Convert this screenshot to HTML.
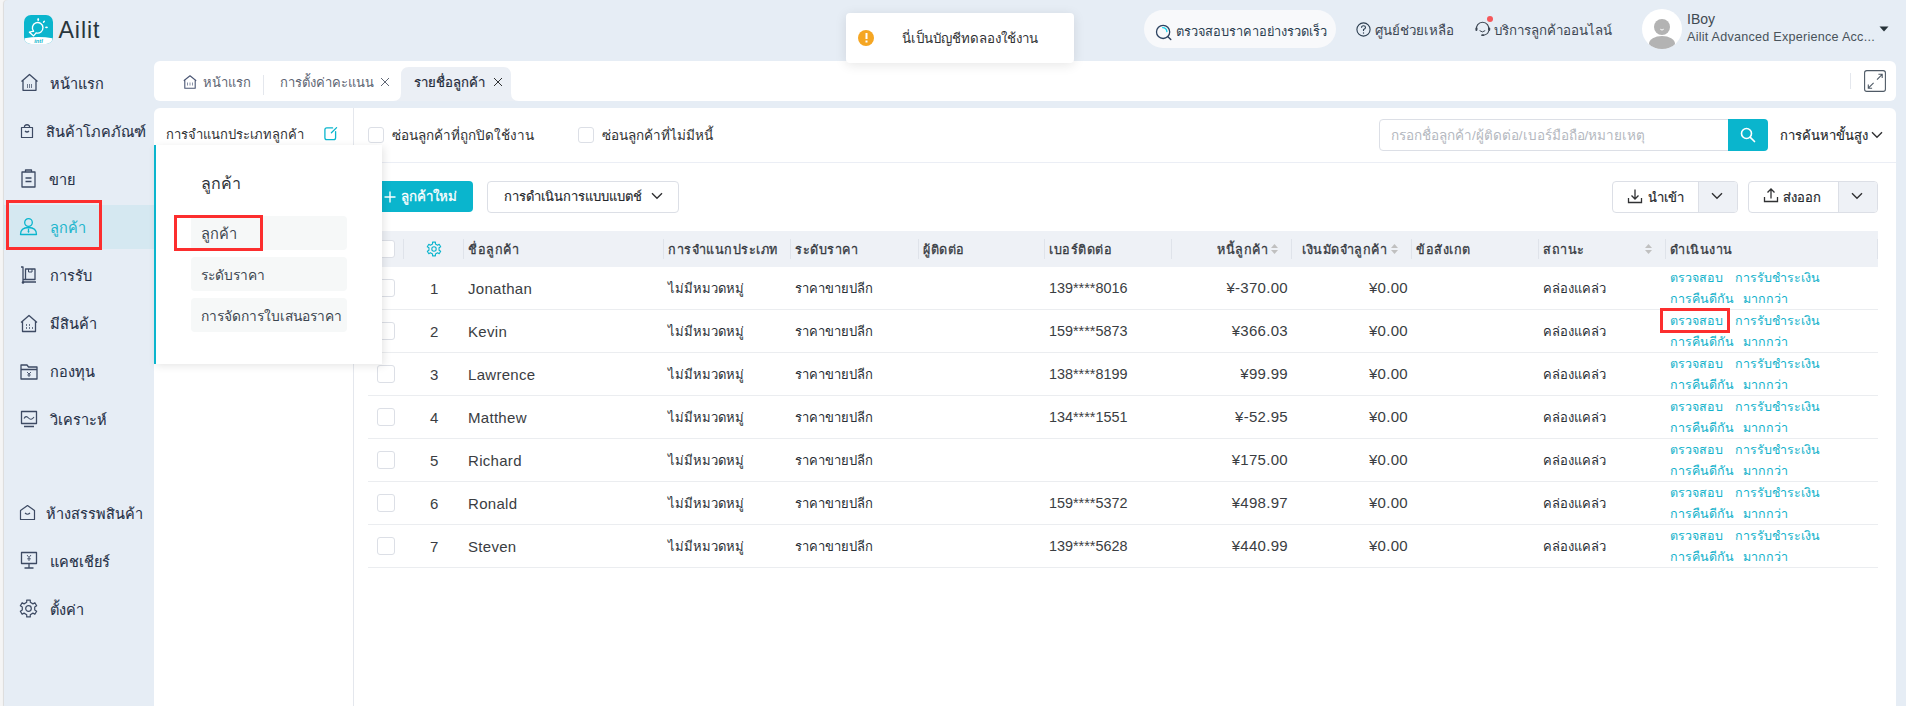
<!DOCTYPE html>
<html><head><meta charset="utf-8">
<style>
*{box-sizing:border-box;margin:0;padding:0}
html,body{width:1906px;height:706px;overflow:hidden}
body{font-family:"Liberation Sans",sans-serif;background:#f5f5f5;position:relative;color:#303133}
.a{position:absolute}
.t{position:absolute;white-space:nowrap;line-height:1}
.frame{position:absolute;left:4px;top:0;width:1902px;height:706px;background:#e6edf5;border-top-left-radius:4px;box-shadow:-1px 0 1px rgba(0,0,0,0.10)}
.sd{position:absolute;white-space:nowrap;line-height:1;color:#2b3447;font-size:14.5px;-webkit-text-stroke:0.1px currentColor}
.card{position:absolute;background:#fff;border-radius:6px}
.sep{position:absolute;top:239px;width:1px;height:20px;background:#dfe3ea}
.rl{position:absolute;left:368px;width:1510px;height:1px;background:#ebedf0}
.cb{position:absolute;width:18px;height:18px;border:1px solid #dcdfe6;border-radius:3px;background:#fff}
.c{position:absolute;white-space:nowrap;line-height:1;font-size:13px;color:#2a2f36}
.n{position:absolute;white-space:nowrap;line-height:1;font-size:15px;color:#3a3d42;letter-spacing:0.3px}
.hd{position:absolute;white-space:nowrap;line-height:1;font-size:12.6px;letter-spacing:0.5px;color:#34383e;-webkit-text-stroke:0.28px currentColor}
.lk{position:absolute;white-space:nowrap;line-height:1;font-size:12.5px;color:#13b2cb}
.ph{position:absolute;white-space:nowrap;line-height:1;font-size:14.4px;color:#3a3d42}
.btn{position:absolute;border:1px solid #dcdfe6;border-radius:4px;background:#fff}
</style></head><body>
<div class="frame"></div>
<div class="a" style="left:24px;top:15px;width:29px;height:29px;border-radius:7px;background:#0ab5cd;overflow:hidden">
<svg width="29" height="29" viewBox="0 0 29 29" style="position:absolute;left:0;top:0">
<path d="M9.6 16.2 A5.3 5.3 0 1 1 12.2 17.9" fill="none" stroke="#fff" stroke-width="1.35" stroke-linecap="round"/>
<path d="M9.6 16.2 L5.4 17.2 L9.6 20.9 L12.2 17.9" fill="none" stroke="#fff" stroke-width="1.3" stroke-linejoin="round"/>
<ellipse cx="14.2" cy="4.6" rx="0.9" ry="1.5" fill="#fff"/>
<ellipse cx="19.9" cy="6.7" rx="0.8" ry="1.4" fill="#fff" transform="rotate(40 19.9 6.7)"/>
<ellipse cx="22.5" cy="12.4" rx="1.4" ry="0.8" fill="#fff"/>
<path d="M0.5 23.2 Q14.5 20.6 28.5 23.2 L29 29 L0 29Z" fill="#fff"/>
<text x="14.5" y="28.2" font-size="5.6" font-family="Liberation Sans" font-weight="bold" font-style="italic" fill="#0ab5cd" text-anchor="middle">intl</text>
</svg></div>
<div class="t" style="left:58.5px;top:19px;font-size:23.2px;letter-spacing:0.9px;color:#2a363c">Ailit</div>
<div class="a" style="left:4px;top:205px;width:150px;height:44px;background:#d5e8f1"></div><svg class="a" style="left:20px;top:73px" width="19" height="19" viewBox="0 0 19 19"><path d="M1.5 8.5 L9.5 1.5 L17.5 8.5 M3 7.3 V17.3 H16 V7.3" fill="none" stroke="#3d4a63" stroke-width="1.3" stroke-linejoin="round"/><path d="M7.5 11V15M9.5 11V15M11.5 11V15" stroke="#3d4a63" stroke-width="1" opacity=".7"/></svg><div class="sd" style="left:49.5px;top:76.5px;color:#263147">หน้าแรก</div><svg class="a" style="left:19px;top:123px" width="16" height="16" viewBox="0 0 16 16"><path d="M2.5 4.5 H13.5 V14.5 H2.5 Z M5.5 4.5 V3 Q8 0.5 10.5 3 V4.5 M6 8 Q8 10 10 8" fill="none" stroke="#3d4a63" stroke-width="1.2" stroke-linejoin="round"/></svg><div class="sd" style="left:45.5px;top:124.5px;color:#263147">สินค้าโภคภัณฑ์</div><svg class="a" style="left:20px;top:169px" width="17" height="19" viewBox="0 0 17 19"><path d="M2 3 H15 V18 H2 Z M5.5 3 V1 H11.5 V3 M5.5 9 H11.5 M5.5 12.5 H11.5" fill="none" stroke="#3d4a63" stroke-width="1.3" stroke-linejoin="round"/></svg><div class="sd" style="left:49px;top:172.5px;color:#263147">ขาย</div><svg class="a" style="left:19px;top:217px" width="19" height="19" viewBox="0 0 19 19"><circle cx="9.5" cy="5.5" r="3.8" fill="none" stroke="#0ab5cd" stroke-width="1.3"/><path d="M1.5 17.5 Q1.5 10.5 9.5 10.5 Q17.5 10.5 17.5 17.5 Z" fill="none" stroke="#0ab5cd" stroke-width="1.3" stroke-linejoin="round"/><path d="M9.5 11.5 V15.5" stroke="#0ab5cd" stroke-width="1.3"/><path d="M8.5 14 L9.5 16 L10.5 14Z" fill="#0ab5cd"/></svg><div class="sd" style="left:49.5px;top:220.5px;color:#1fb6cd">ลูกค้า</div><svg class="a" style="left:19px;top:266px" width="19" height="19" viewBox="0 0 19 19"><path d="M2 1 H4 V16 H17 M4 13.5 H16 V3 H6.5 V13.5" fill="none" stroke="#3d4a63" stroke-width="1.3" stroke-linejoin="round"/><circle cx="4" cy="16.5" r="1.3" fill="#3d4a63"/><path d="M9.5 3 V6 H13 V3" fill="none" stroke="#3d4a63" stroke-width="1"/></svg><div class="sd" style="left:49.5px;top:268.5px;color:#263147">การรับ</div><svg class="a" style="left:20px;top:314px" width="18" height="19" viewBox="0 0 18 19"><path d="M1 8.5 L9 1.5 L17 8.5 M2.5 7.3 V17.5 H15.5 V7.3" fill="none" stroke="#3d4a63" stroke-width="1.3" stroke-linejoin="round"/><path d="M6 11h1M6 14h1M9 14h1M12 14h1M9 11h1" stroke="#3d4a63" stroke-width="1.4"/></svg><div class="sd" style="left:49.5px;top:316.5px;color:#263147">มีสินค้า</div><svg class="a" style="left:20px;top:363px" width="18" height="17" viewBox="0 0 18 17"><path d="M1 2 H7 L8.5 4 H17 V16 H1 Z M1 6.5 H17" fill="none" stroke="#3d4a63" stroke-width="1.3" stroke-linejoin="round"/><path d="M7 9 L9 11 L11 9 M9 11 V14 M7.3 12 H10.7" fill="none" stroke="#3d4a63" stroke-width="0.9"/></svg><div class="sd" style="left:49.5px;top:364.5px;color:#263147">กองทุน</div><svg class="a" style="left:20px;top:410px" width="18" height="19" viewBox="0 0 18 19"><path d="M1.5 1.5 H16.5 V13.5 H1.5 Z M4 16.5 H14" fill="none" stroke="#3d4a63" stroke-width="1.3" stroke-linejoin="round"/><path d="M4 8.5 Q6 5 8.5 8 Q11 11 14 7" fill="none" stroke="#3d4a63" stroke-width="1.1"/></svg><div class="sd" style="left:49.5px;top:412.5px;color:#263147">วิเคราะห์</div><svg class="a" style="left:19px;top:504px" width="17" height="17" viewBox="0 0 17 17"><path d="M1.5 6.5 L8.5 1.5 L15.5 6.5 V15.5 H1.5 Z" fill="none" stroke="#3d4a63" stroke-width="1.2" stroke-linejoin="round"/><path d="M6 9 Q8.5 11.5 11 9" fill="none" stroke="#3d4a63" stroke-width="1.1"/></svg><div class="sd" style="left:45.5px;top:506.5px;color:#263147">ห้างสรรพสินค้า</div><svg class="a" style="left:20px;top:551px" width="18" height="19" viewBox="0 0 18 19"><path d="M1.5 1.5 H16.5 V12.5 H1.5 Z M9 12.5 V16.5 M4.5 17 H13.5" fill="none" stroke="#3d4a63" stroke-width="1.3" stroke-linejoin="round"/><path d="M7 4 L9 6.5 L11 4 M9 6.5 V10 M7.2 7.8 H10.8" fill="none" stroke="#3d4a63" stroke-width="0.9"/></svg><div class="sd" style="left:49.5px;top:554.5px;color:#263147">แคชเชียร์</div><svg class="a" style="left:19px;top:599px" width="19" height="19" viewBox="0 0 19 19"><path d="M7.71 3.35 L7.71 1.09 L11.29 1.09 L11.29 3.35 L13.93 4.88 L15.89 3.75 L17.68 6.84 L15.72 7.97 L15.72 11.03 L17.68 12.16 L15.89 15.25 L13.93 14.12 L11.29 15.65 L11.29 17.91 L7.71 17.91 L7.71 15.65 L5.07 14.12 L3.11 15.25 L1.32 12.16 L3.28 11.03 L3.28 7.97 L1.32 6.84 L3.11 3.75 L5.07 4.88 Z" fill="none" stroke="#3d4a63" stroke-width="1.2" stroke-linejoin="round"/><circle cx="9.5" cy="9.5" r="2.8" fill="none" stroke="#3d4a63" stroke-width="1.2"/></svg><div class="sd" style="left:49.5px;top:602.5px;color:#263147">ตั้งค่า</div><div class="a" style="left:6px;top:200px;width:96px;height:50px;border:3px solid #fc2e2e"></div><div class="a" style="left:846px;top:13px;width:228px;height:50px;background:#fff;border-radius:4px;box-shadow:0 2px 12px rgba(0,0,0,0.10);z-index:5">
<div class="a" style="left:12px;top:17px;width:16px;height:16px;border-radius:50%;background:#f5a623"></div>
<div class="t" style="left:18.5px;top:19.5px;width:3px;height:8px;"><svg width="3" height="10" style="position:absolute;left:0;top:0"><rect x="0.5" y="0" width="2" height="6" fill="#fff"/><rect x="0.5" y="7.5" width="2" height="2" fill="#fff"/></svg></div>
<div class="t" style="left:56px;top:19px;font-size:13.3px;color:#303133">นี่เป็นบัญชีทดลองใช้งาน</div>
</div><div class="a" style="left:1144px;top:10px;width:192px;height:38px;background:#f8f9fb;border-radius:19px"></div>
<svg class="a" style="left:1155px;top:24px" width="18" height="18" viewBox="0 0 18 18"><circle cx="8.1" cy="7.9" r="6.6" fill="none" stroke="#2c4260" stroke-width="1.3"/><path d="M12.9 12.7 L15.8 15.6" stroke="#2c4260" stroke-width="1.4" stroke-linecap="round"/><path d="M7.6 3.6 A4.4 4.4 0 0 1 11.9 7.6" fill="none" stroke="#19d3ee" stroke-width="1.3" stroke-linecap="round"/></svg>
<div class="t" style="left:1176px;top:26px;font-size:12.8px;color:#2c3e50">ตรวจสอบราคาอย่างรวดเร็ว</div>
<svg class="a" style="left:1356px;top:22px" width="15" height="15" viewBox="0 0 15 15"><circle cx="7.5" cy="7.5" r="6.6" fill="none" stroke="#2c3e50" stroke-width="1.1"/><path d="M5.5 5.8 Q5.5 3.8 7.5 3.8 Q9.5 3.8 9.5 5.6 Q9.5 6.8 7.5 7.6 V9" fill="none" stroke="#2c3e50" stroke-width="1.1"/><circle cx="7.5" cy="11" r="0.7" fill="#2c3e50"/></svg>
<div class="t" style="left:1375px;top:23.5px;font-size:13.3px;color:#3c4652">ศูนย์ช่วยเหลือ</div>
<svg class="a" style="left:1474px;top:20px" width="18" height="18" viewBox="0 0 18 18"><path d="M2.6 10 A6.2 6.2 0 1 1 14.6 10" fill="none" stroke="#3c4652" stroke-width="1.1"/><rect x="1.4" y="7.4" width="2" height="3.6" rx="1" fill="#3c4652"/><rect x="14.2" y="7.4" width="2" height="3.6" rx="1" fill="#3c4652"/><path d="M5.6 10.6 Q8.4 13.2 11.2 10.6" fill="none" stroke="#3c4652" stroke-width="1"/><path d="M14.8 10.5 Q14 14.6 9.5 15.2" fill="none" stroke="#3c4652" stroke-width="1.1"/><rect x="7.2" y="14.3" width="3" height="1.8" rx="0.9" fill="#3c4652"/></svg>
<div class="a" style="left:1487px;top:16px;width:6px;height:6px;border-radius:50%;background:#f5575a"></div>
<div class="t" style="left:1494px;top:23.5px;font-size:13.3px;color:#3c4652">บริการลูกค้าออนไลน์</div>
<div class="a" style="left:1642px;top:9px;width:40px;height:40px;border-radius:50%;background:#fff;overflow:hidden">
<svg width="40" height="40" viewBox="0 0 40 40" style="position:absolute;left:0;top:0"><circle cx="20" cy="18" r="8" fill="#b3b3b3"/><path d="M18.3 20.2 Q20 22 21.7 20.2" fill="none" stroke="#fff" stroke-width="1"/><ellipse cx="20" cy="35" rx="13" ry="8" fill="#b3b3b3"/></svg></div>
<div class="t" style="left:1687px;top:12px;font-size:14px;color:#3f4a52">IBoy</div>
<div class="t" style="left:1687px;top:31px;font-size:12.6px;letter-spacing:0.25px;color:#48525a">Ailit Advanced Experience Acc...</div>
<svg class="a" style="left:1879px;top:26px" width="10" height="6" viewBox="0 0 10 6"><path d="M0.5 0.5 H9.5 L5 5.5Z" fill="#263238"/></svg>
<div class="card" style="left:154px;top:61px;width:1742px;height:40px"></div><svg class="a" style="left:183px;top:75px" width="14" height="14" viewBox="0 0 14 14"><path d="M0.8 5.8 L7 0.8 L13.2 5.8 M1.8 5 V13.2 H12.2 V5" fill="none" stroke="#4a5573" stroke-width="1.1" stroke-linejoin="round"/><path d="M4.5 7.5V10.5M7 7.5V10.5M9.5 7.5V10.5" stroke="#8a93a8" stroke-width="1"/></svg><div class="t" style="left:203px;top:76px;font-size:13px;color:#5d6573">หน้าแรก</div><div class="a" style="left:263px;top:75px;width:1px;height:20px;background:#e4e7ed"></div><div class="t" style="left:280px;top:76px;font-size:13px;color:#5d6573">การตั้งค่าคะแนน</div><svg class="a" style="left:380px;top:77px" width="10" height="10" viewBox="0 0 10 10"><path d="M1 1 L9 9 M9 1 L1 9" stroke="#606775" stroke-width="1"/></svg><svg class="a" style="left:393px;top:67px" width="126" height="34" viewBox="0 0 126 34"><path d="M0 34 Q8 34 8 26 V8 Q8 0 16 0 H110 Q118 0 118 8 V26 Q118 34 126 34 Z" fill="#ebeff5"/></svg><div class="t" style="left:414px;top:76px;font-size:13.2px;color:#1f2a3a;-webkit-text-stroke:0.2px currentColor">รายชื่อลูกค้า</div><svg class="a" style="left:493px;top:77px" width="10" height="10" viewBox="0 0 10 10"><path d="M1 1 L9 9 M9 1 L1 9" stroke="#303133" stroke-width="1"/></svg><div class="a" style="left:1850px;top:73px;width:1px;height:16px;background:#e4e7ed"></div><svg class="a" style="left:1864px;top:70px" width="22" height="22" viewBox="0 0 22 22"><rect x="0.6" y="0.6" width="20.8" height="20.8" rx="2.2" fill="none" stroke="#4f5a66" stroke-width="1.1"/><path d="M13 9.6 L18.2 4.3 M14.4 4.3 H18.2 V8.1 M4.3 18.2 L9.6 12.9 M4.3 14.4 V18.2 H8.1" fill="none" stroke="#4f5a66" stroke-width="1.1"/></svg><div class="card" style="left:154px;top:108px;width:1742px;height:620px"></div><div class="a" style="left:353px;top:108px;width:1px;height:598px;background:#e4e7ed"></div><div class="t" style="left:166px;top:128px;font-size:13px;color:#303133">การจำแนกประเภทลูกค้า</div><svg class="a" style="left:323px;top:126px" width="16" height="16" viewBox="0 0 16 16"><path d="M9.6 1.9 H3.8 Q1.9 1.9 1.9 3.8 V11.8 Q1.9 13.7 3.8 13.7 H10.7 Q12.6 13.7 12.6 11.8 V5.6" fill="none" stroke="#0ab5cd" stroke-width="1.3" stroke-linecap="round"/><path d="M8.4 6.8 L13.6 1.6" stroke="#0ab5cd" stroke-width="1.3" stroke-linecap="round"/></svg><div class="cb" style="left:368px;top:127px;width:16px;height:16px;border-radius:3px"></div><div class="t" style="left:392px;top:128.5px;font-size:13.5px;color:#303133">ซ่อนลูกค้าที่ถูกปิดใช้งาน</div><div class="cb" style="left:578px;top:127px;width:16px;height:16px;border-radius:3px"></div><div class="t" style="left:602px;top:128.5px;font-size:13.5px;color:#303133">ซ่อนลูกค้าที่ไม่มีหนี้</div><div class="a" style="left:1379px;top:119px;width:352px;height:32px;border:1px solid #dcdfe6;border-radius:4px 0 0 4px;background:#fff"></div><div class="t" style="left:1391px;top:129px;font-size:13.5px;color:#b4b8c0">กรอกชื่อลูกค้า/ผู้ติดต่อ/เบอร์มือถือ/หมายเหตุ</div><div class="a" style="left:1728px;top:119px;width:40px;height:32px;background:#0ab5cd;border-radius:0 4px 4px 0"></div><svg class="a" style="left:1740px;top:127px" width="16" height="16" viewBox="0 0 16 16"><circle cx="6.5" cy="6.5" r="5" fill="none" stroke="#fff" stroke-width="1.6"/><path d="M10.3 10.3 L14.5 14.5" stroke="#fff" stroke-width="1.7" stroke-linecap="round"/></svg><div class="t" style="left:1780px;top:129px;font-size:13px;color:#25282c;-webkit-text-stroke:0.15px currentColor">การค้นหาขั้นสูง</div><svg class="a" style="left:1871px;top:131px" width="12" height="8" viewBox="0 0 12 8"><path d="M1 1.2 L6 6.2 L11 1.2" fill="none" stroke="#303133" stroke-width="1.4"/></svg><div class="a" style="left:354px;top:162px;width:1542px;height:1px;background:#ebeef5"></div><div class="a" style="left:354px;top:181px;width:119px;height:31px;background:#0ab5cd;border-radius:0 4px 4px 0"></div><svg class="a" style="left:384px;top:191px" width="12" height="12" viewBox="0 0 12 12"><path d="M6 0.5V11.5M0.5 6H11.5" stroke="#fff" stroke-width="1.4"/></svg><div class="t" style="left:401px;top:190px;font-size:13.3px;color:#fff;-webkit-text-stroke:0.3px #fff">ลูกค้าใหม่</div><div class="btn" style="left:487px;top:181px;width:192px;height:32px"></div><div class="t" style="left:504px;top:190px;font-size:13px;color:#25282c;-webkit-text-stroke:0.15px currentColor">การดำเนินการแบบแบตช์</div><svg class="a" style="left:651px;top:192px" width="12" height="8" viewBox="0 0 12 8"><path d="M1 1.2 L6 6.2 L11 1.2" fill="none" stroke="#303133" stroke-width="1.4"/></svg><div class="btn" style="left:1612px;top:181px;width:126px;height:32px;overflow:hidden"><div class="a" style="left:85px;top:0;width:40px;height:30px;background:#eef1f6;border-left:1px solid #dcdfe6"></div></div><svg class="a" style="left:1627px;top:188px" width="16" height="16" viewBox="0 0 16 16"><path d="M1.5 10 V14.5 H14.5 V10 M8 1.5 V11 M4.5 7.5 L8 11 L11.5 7.5" fill="none" stroke="#303133" stroke-width="1.3"/></svg><div class="t" style="left:1648px;top:191px;font-size:13px;color:#25282c;-webkit-text-stroke:0.2px currentColor">นำเข้า</div><svg class="a" style="left:1711px;top:192px" width="12" height="8" viewBox="0 0 12 8"><path d="M1 1.2 L6 6.2 L11 1.2" fill="none" stroke="#303133" stroke-width="1.4"/></svg><div class="btn" style="left:1748px;top:181px;width:130px;height:32px;overflow:hidden"><div class="a" style="left:89px;top:0;width:40px;height:30px;background:#eef1f6;border-left:1px solid #dcdfe6"></div></div><svg class="a" style="left:1763px;top:187px" width="16" height="16" viewBox="0 0 16 16"><path d="M1.5 10 V14.5 H14.5 V10 M8 11.5 V2 M4.5 5.5 L8 2 L11.5 5.5" fill="none" stroke="#303133" stroke-width="1.3"/></svg><div class="t" style="left:1783px;top:191px;font-size:13px;color:#25282c;-webkit-text-stroke:0.2px currentColor">ส่งออก</div><svg class="a" style="left:1851px;top:192px" width="12" height="8" viewBox="0 0 12 8"><path d="M1 1.2 L6 6.2 L11 1.2" fill="none" stroke="#303133" stroke-width="1.4"/></svg><div class="a" style="left:368px;top:231px;width:1510px;height:36px;background:#eef1f6"></div><div class="sep" style="left:403px"></div><div class="sep" style="left:463px"></div><div class="sep" style="left:663px"></div><div class="sep" style="left:790px"></div><div class="sep" style="left:918px"></div><div class="sep" style="left:1044px"></div><div class="sep" style="left:1171px"></div><div class="sep" style="left:1291px"></div><div class="sep" style="left:1411px"></div><div class="sep" style="left:1538px"></div><div class="sep" style="left:1665px"></div><div class="sep" style="left:1877px"></div><div class="cb" style="left:377px;top:240px"></div><svg class="a" style="left:426px;top:241px" width="16" height="16" viewBox="0 0 16 16"><path d="M6.55 3.01 L6.54 1.15 L9.46 1.15 L9.45 3.01 L11.60 4.25 L13.20 3.32 L14.66 5.84 L13.05 6.76 L13.05 9.24 L14.66 10.16 L13.20 12.68 L11.60 11.75 L9.45 12.99 L9.46 14.85 L6.54 14.85 L6.55 12.99 L4.40 11.75 L2.80 12.68 L1.34 10.16 L2.95 9.24 L2.95 6.76 L1.34 5.84 L2.80 3.32 L4.40 4.25 Z" fill="none" stroke="#0ab5cd" stroke-width="1.1" stroke-linejoin="round"/><circle cx="8" cy="8" r="2.2" fill="none" stroke="#0ab5cd" stroke-width="1.1"/></svg><div class="hd" style="left:468px;top:244px">ชื่อลูกค้า</div><div class="hd" style="left:668px;top:244px">การจำแนกประเภท</div><div class="hd" style="left:795px;top:244px">ระดับราคา</div><div class="hd" style="left:923px;top:244px">ผู้ติดต่อ</div><div class="hd" style="left:1049px;top:244px">เบอร์ติดต่อ</div><div class="hd" style="left:1416px;top:244px">ข้อสังเกต</div><div class="hd" style="left:1543px;top:244px">สถานะ</div><div class="hd" style="left:1670px;top:244px">ดำเนินงาน</div><div class="hd" style="left:1217px;top:244px">หนี้ลูกค้า</div><div class="hd" style="left:1302px;top:244px">เงินมัดจำลูกค้า</div><svg class="a" style="left:1270px;top:243px" width="9" height="12" viewBox="0 0 9 12"><path d="M1 5 L4.5 1 L8 5Z M1 7 L4.5 11 L8 7Z" fill="#c0c0c0"/></svg><svg class="a" style="left:1390px;top:243px" width="9" height="12" viewBox="0 0 9 12"><path d="M1 5 L4.5 1 L8 5Z M1 7 L4.5 11 L8 7Z" fill="#c0c0c0"/></svg><svg class="a" style="left:1644px;top:243px" width="9" height="12" viewBox="0 0 9 12"><path d="M1 5 L4.5 1 L8 5Z M1 7 L4.5 11 L8 7Z" fill="#c0c0c0"/></svg><div class="rl" style="top:309px"></div><div class="cb" style="left:377px;top:279px"></div><div class="n" style="left:430px;top:280.5px">1</div><div class="n" style="left:468px;top:280.5px">Jonathan</div><div class="c" style="left:668px;top:282px">ไม่มีหมวดหมู่</div><div class="c" style="left:795px;top:282px">ราคาขายปลีก</div><div class="ph" style="left:1049px;top:281px">139****8016</div><div class="n" style="right:618px;top:280px">¥-370.00</div><div class="n" style="right:498px;top:280px">¥0.00</div><div class="c" style="left:1543px;top:282px">คล่องแคล่ว</div><div class="lk" style="left:1670px;top:271.5px">ตรวจสอบ</div><div class="lk" style="left:1735px;top:271.5px">การรับชำระเงิน</div><div class="lk" style="left:1670px;top:292.5px">การคืนดีกัน</div><div class="lk" style="left:1743px;top:292.5px">มากกว่า</div><div class="rl" style="top:352px"></div><div class="cb" style="left:377px;top:322px"></div><div class="n" style="left:430px;top:323.5px">2</div><div class="n" style="left:468px;top:323.5px">Kevin</div><div class="c" style="left:668px;top:325px">ไม่มีหมวดหมู่</div><div class="c" style="left:795px;top:325px">ราคาขายปลีก</div><div class="ph" style="left:1049px;top:324px">159****5873</div><div class="n" style="right:618px;top:323px">¥366.03</div><div class="n" style="right:498px;top:323px">¥0.00</div><div class="c" style="left:1543px;top:325px">คล่องแคล่ว</div><div class="lk" style="left:1670px;top:314.5px">ตรวจสอบ</div><div class="lk" style="left:1735px;top:314.5px">การรับชำระเงิน</div><div class="lk" style="left:1670px;top:335.5px">การคืนดีกัน</div><div class="lk" style="left:1743px;top:335.5px">มากกว่า</div><div class="rl" style="top:395px"></div><div class="cb" style="left:377px;top:365px"></div><div class="n" style="left:430px;top:366.5px">3</div><div class="n" style="left:468px;top:366.5px">Lawrence</div><div class="c" style="left:668px;top:368px">ไม่มีหมวดหมู่</div><div class="c" style="left:795px;top:368px">ราคาขายปลีก</div><div class="ph" style="left:1049px;top:367px">138****8199</div><div class="n" style="right:618px;top:366px">¥99.99</div><div class="n" style="right:498px;top:366px">¥0.00</div><div class="c" style="left:1543px;top:368px">คล่องแคล่ว</div><div class="lk" style="left:1670px;top:357.5px">ตรวจสอบ</div><div class="lk" style="left:1735px;top:357.5px">การรับชำระเงิน</div><div class="lk" style="left:1670px;top:378.5px">การคืนดีกัน</div><div class="lk" style="left:1743px;top:378.5px">มากกว่า</div><div class="rl" style="top:438px"></div><div class="cb" style="left:377px;top:408px"></div><div class="n" style="left:430px;top:409.5px">4</div><div class="n" style="left:468px;top:409.5px">Matthew</div><div class="c" style="left:668px;top:411px">ไม่มีหมวดหมู่</div><div class="c" style="left:795px;top:411px">ราคาขายปลีก</div><div class="ph" style="left:1049px;top:410px">134****1551</div><div class="n" style="right:618px;top:409px">¥-52.95</div><div class="n" style="right:498px;top:409px">¥0.00</div><div class="c" style="left:1543px;top:411px">คล่องแคล่ว</div><div class="lk" style="left:1670px;top:400.5px">ตรวจสอบ</div><div class="lk" style="left:1735px;top:400.5px">การรับชำระเงิน</div><div class="lk" style="left:1670px;top:421.5px">การคืนดีกัน</div><div class="lk" style="left:1743px;top:421.5px">มากกว่า</div><div class="rl" style="top:481px"></div><div class="cb" style="left:377px;top:451px"></div><div class="n" style="left:430px;top:452.5px">5</div><div class="n" style="left:468px;top:452.5px">Richard</div><div class="c" style="left:668px;top:454px">ไม่มีหมวดหมู่</div><div class="c" style="left:795px;top:454px">ราคาขายปลีก</div><div class="n" style="right:618px;top:452px">¥175.00</div><div class="n" style="right:498px;top:452px">¥0.00</div><div class="c" style="left:1543px;top:454px">คล่องแคล่ว</div><div class="lk" style="left:1670px;top:443.5px">ตรวจสอบ</div><div class="lk" style="left:1735px;top:443.5px">การรับชำระเงิน</div><div class="lk" style="left:1670px;top:464.5px">การคืนดีกัน</div><div class="lk" style="left:1743px;top:464.5px">มากกว่า</div><div class="rl" style="top:524px"></div><div class="cb" style="left:377px;top:494px"></div><div class="n" style="left:430px;top:495.5px">6</div><div class="n" style="left:468px;top:495.5px">Ronald</div><div class="c" style="left:668px;top:497px">ไม่มีหมวดหมู่</div><div class="c" style="left:795px;top:497px">ราคาขายปลีก</div><div class="ph" style="left:1049px;top:496px">159****5372</div><div class="n" style="right:618px;top:495px">¥498.97</div><div class="n" style="right:498px;top:495px">¥0.00</div><div class="c" style="left:1543px;top:497px">คล่องแคล่ว</div><div class="lk" style="left:1670px;top:486.5px">ตรวจสอบ</div><div class="lk" style="left:1735px;top:486.5px">การรับชำระเงิน</div><div class="lk" style="left:1670px;top:507.5px">การคืนดีกัน</div><div class="lk" style="left:1743px;top:507.5px">มากกว่า</div><div class="rl" style="top:567px"></div><div class="cb" style="left:377px;top:537px"></div><div class="n" style="left:430px;top:538.5px">7</div><div class="n" style="left:468px;top:538.5px">Steven</div><div class="c" style="left:668px;top:540px">ไม่มีหมวดหมู่</div><div class="c" style="left:795px;top:540px">ราคาขายปลีก</div><div class="ph" style="left:1049px;top:539px">139****5628</div><div class="n" style="right:618px;top:538px">¥440.99</div><div class="n" style="right:498px;top:538px">¥0.00</div><div class="c" style="left:1543px;top:540px">คล่องแคล่ว</div><div class="lk" style="left:1670px;top:529.5px">ตรวจสอบ</div><div class="lk" style="left:1735px;top:529.5px">การรับชำระเงิน</div><div class="lk" style="left:1670px;top:550.5px">การคืนดีกัน</div><div class="lk" style="left:1743px;top:550.5px">มากกว่า</div><div class="a" style="left:1660px;top:308px;width:70px;height:25px;border:3px solid #fc2e2e"></div><div class="a" style="left:154px;top:145px;width:228px;height:219px;background:#fff;border-left:2px solid #0ab5cd;box-shadow:2px 2px 8px rgba(0,0,0,0.10);z-index:6">
<div class="t" style="left:45px;top:30.5px;font-size:16px;color:#2e3238">ลูกค้า</div>
<div class="a" style="left:35px;top:71px;width:156px;height:34px;background:#f6f8f8;border-radius:4px"></div>
<div class="t" style="left:45px;top:82px;font-size:14.6px;color:#3c4650">ลูกค้า</div>
<div class="a" style="left:35px;top:112px;width:156px;height:34px;background:#f6f8f8;border-radius:4px"></div>
<div class="t" style="left:45px;top:123.5px;font-size:13.8px;color:#3c4650">ระดับราคา</div>
<div class="a" style="left:35px;top:153px;width:156px;height:34px;background:#f6f8f8;border-radius:4px"></div>
<div class="t" style="left:45px;top:164.5px;font-size:13.8px;color:#3c4650">การจัดการใบเสนอราคา</div>
<div class="a" style="left:18px;top:70px;width:89px;height:36px;border:3px solid #fc2e2e"></div>
</div></body></html>
